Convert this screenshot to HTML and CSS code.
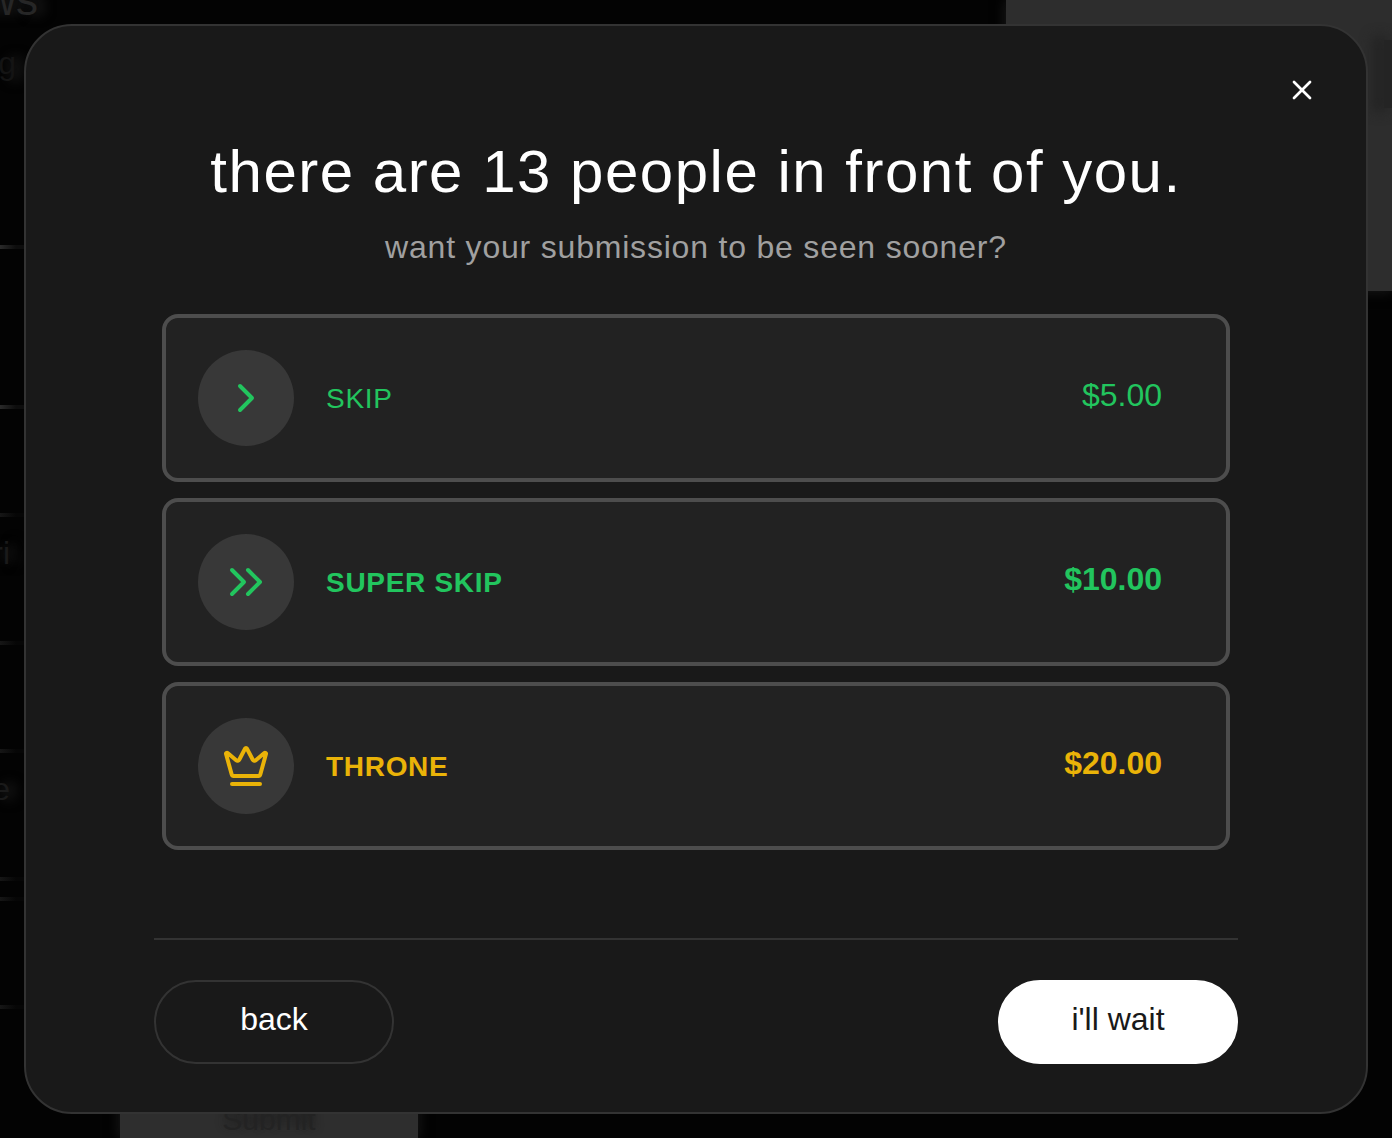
FILE: index.html
```html
<!DOCTYPE html>
<html lang="en">
<head>
    <meta charset="UTF-8">
    <meta name="viewport" content="width=device-width, initial-scale=1.0">
    <title>Skip the line</title>
    <link rel="stylesheet" href="styles.css">
</head>
<body>
    <div class="page" aria-hidden="true">
        <div class="feed">
            <div class="feed-title"><span>ws</span></div>
            <div class="feed-head"><span>g</span></div>
            <div class="feed-row tall bright"></div>
            <div class="feed-row short bright"></div>
            <div class="feed-row"><span>ri</span></div>
            <div class="feed-row short"></div>
            <div class="feed-row"><span>e</span></div>
            <div class="feed-row thin"></div>
            <div class="feed-row short"></div>
            <div class="feed-row"></div>
        </div>
        <div class="submit-bar">
            <div class="submit">Submit</div>
        </div>
        <div class="player">
            <div class="player-mark"></div>
        </div>
    </div>

    <div class="overlay">
        <main class="modal" role="dialog" aria-modal="true" aria-labelledby="modal-title">
            <button class="close" type="button" aria-label="Close">
                <svg viewBox="0 0 24 24"><path d="M18 6 6 18"/><path d="m6 6 12 12"/></svg>
            </button>

            <header class="modal-header">
                <h1 id="modal-title">there are 13 people in front of you.</h1>
                <p>want your submission to be seen sooner?</p>
            </header>

            <div class="options">
                <button class="option green" type="button">
                    <span class="icon">
                        <svg viewBox="0 0 24 24"><path d="m9 18 6-6-6-6"/></svg>
                    </span>
                    <span class="label">SKIP</span>
                    <span class="price">$5.00</span>
                </button>
                <button class="option green bold" type="button">
                    <span class="icon">
                        <svg viewBox="0 0 24 24"><path d="m5 18 6-6-6-6"/><path d="m13 18 6-6-6-6"/></svg>
                    </span>
                    <span class="label">SUPER SKIP</span>
                    <span class="price">$10.00</span>
                </button>
                <button class="option gold bold" type="button">
                    <span class="icon">
                        <svg viewBox="0 0 24 24"><path d="M11.562 3.266a.5.5 0 0 1 .876 0L15.39 8.87a1 1 0 0 0 1.516.294L21.183 5.5a.5.5 0 0 1 .798.519l-2.834 10.246a1 1 0 0 1-.956.734H5.81a1 1 0 0 1-.957-.734L2.02 6.02a.5.5 0 0 1 .798-.519l4.276 3.664a1 1 0 0 0 1.516-.294z"/><path d="M5 21h14"/></svg>
                    </span>
                    <span class="label">THRONE</span>
                    <span class="price">$20.00</span>
                </button>
            </div>

            <footer class="modal-footer">
                <button class="btn" type="button">back</button>
                <button class="btn btn-primary" type="button">i'll wait</button>
            </footer>
        </main>
    </div>
</body>
</html>
```
FILE: styles.css
```css
* {
	box-sizing: border-box;
}

body {
	font-family: "Liberation Sans", Arial, sans-serif;
	margin: 0;
	background: #030303;
	color: #fff;
}

button {
	font-family: inherit;
	color: inherit;
	cursor: pointer;
}

svg {
	fill: none;
	stroke: currentColor;
	stroke-width: 2;
	stroke-linecap: round;
	stroke-linejoin: round;
}

/* Dimmed page behind the dialog */
.page {
	display: flex;
	height: 100vh;
	overflow: hidden;
	color: #1a1a1a;
}

.feed {
	width: 40px;
	flex: none;
	font-size: 32px;
	line-height: 32px;
	text-shadow: 8px 0 12px #222;
}

.feed-title,
.feed-head,
.feed-row {
	display: flex;
	justify-content: flex-end;
}

.feed-title {
	width: 38px;
	height: 45px;
	font-size: 44px;
	line-height: 0;
	color: #262626;
}

.feed-head {
	width: 16px;
	height: 200px;
	line-height: 36px;
	color: #141414;
}

.feed-row {
	width: 24px;
	height: 128px;
	padding: 24px 14px 0 0;
	background: linear-gradient(to right, #161616, #060606 16px) no-repeat;
	background-size: 24px 4px;
}

.feed-row.bright {
	background-image: linear-gradient(to right, #2a2a2a, #0d0d0d 16px);
}

.feed-row.tall {
	height: 160px;
}

.feed-row.short {
	height: 108px;
}

.feed-row.thin {
	height: 20px;
	padding: 0;
}

.submit-bar {
	flex: 1;
	display: flex;
	align-items: flex-end;
	padding-left: 80px;
}

.submit {
	width: 298px;
	height: 60px;
	font-size: 30px;
	line-height: 84px;
	text-align: center;
	color: #232323;
	text-shadow: 0 -4px 8px #1a1a1a;
	background: #2e2e2e;
	box-shadow: 0 0 12px #1c1c1c;
}

.player {
	width: 386px;
	height: 291px;
	display: flex;
	justify-content: flex-end;
	padding-top: 40px;
	background: #2d2d2d;
	box-shadow: 0 0 12px #1c1c1c;
}

.player-mark {
	width: 8px;
	height: 68px;
	background: #242424;
	box-shadow: -8px 0 12px 4px #242424;
}

/* Dialog */
.overlay {
	position: absolute;
	top: 0;
	left: 0;
	width: 100%;
	padding: 24px;
}

.modal {
	position: relative;
	padding: 110px 128px 48px;
	background: #191919;
	border: 2px solid #333;
	border-radius: 48px;
}

.close {
	position: absolute;
	top: 32px;
	right: 32px;
	width: 64px;
	height: 64px;
	padding: 16px;
	background: none;
	border: 0;
}

.close svg {
	display: block;
	width: 32px;
	height: 32px;
}

.modal-header {
	text-align: center;
}

.modal-header h1 {
	margin: 0;
	font-size: 60px;
	font-weight: normal;
	line-height: 72px;
	letter-spacing: 0.025em;
}

.modal-header p {
	margin: 15px 0 0;
	font-size: 32px;
	line-height: 48px;
	letter-spacing: 0.025em;
	color: #a0a0a0;
}

.options {
	display: flex;
	flex-direction: column;
	gap: 16px;
	padding: 43px 8px 88px;
}

.option {
	display: flex;
	align-items: center;
	gap: 32px;
	padding: 32px 64px 32px 32px;
	background: #222;
	border: 4px solid #4d4d4d;
	border-radius: 16px;
}

.icon {
	display: flex;
	align-items: center;
	justify-content: center;
	width: 96px;
	height: 96px;
	border-radius: 50%;
	background: #383838;
}

.icon svg {
	width: 48px;
	height: 48px;
}

.label {
	padding-top: 2px;
	font-size: 28px;
	letter-spacing: 0.025em;
}

.price {
	margin-left: auto;
	padding-bottom: 6px;
	font-size: 32px;
}

.green {
	color: #22c55e;
}

.gold {
	color: #eab308;
}

.bold {
	font-weight: bold;
}

.modal-footer {
	display: flex;
	justify-content: space-between;
	padding-top: 40px;
	border-top: 2px solid #333;
}

.btn {
	width: 240px;
	height: 84px;
	padding: 0 0 6px;
	font-size: 32px;
	background: none;
	border: 2px solid #333;
	border-radius: 42px;
}

.btn-primary {
	background: #fff;
	border-color: #fff;
	color: #191919;
}
```
